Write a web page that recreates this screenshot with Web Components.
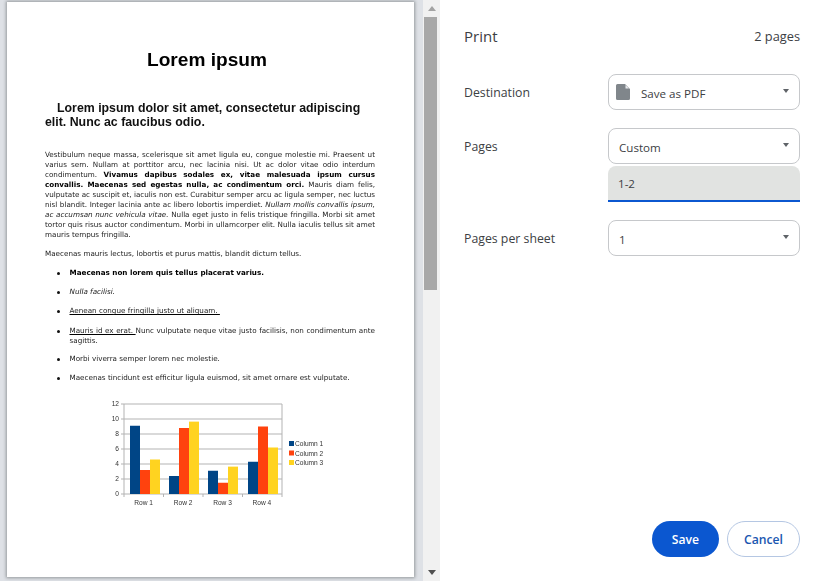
<!DOCTYPE html>
<html lang="en">
<head>
<meta charset="utf-8">
<title>Print</title>
<style>
  html, body { margin: 0; height: 100%; overflow: hidden; background: #fff; }
</style>
</head>
<body>
<print-app>
  <pdf-preview slot="preview">
    <h1 slot="title">Lorem ipsum</h1>
    <h2 slot="subtitle">Lorem ipsum dolor sit amet, consectetur adipiscing elit. Nunc ac faucibus odio.</h2>
  </pdf-preview>
  <print-sidebar slot="sidebar">
    <setting-row label="Destination">
      <select-box value="Save as PDF" icon></select-box>
    </setting-row>
    <setting-row label="Pages" tight>
      <select-box value="Custom"></select-box>
      <range-input value="1-2"></range-input>
    </setting-row>
    <setting-row label="Pages per sheet">
      <select-box value="1"></select-box>
    </setting-row>
  </print-sidebar>
</print-app>

<script>
class PrintApp extends HTMLElement {
    constructor() {
        super();
        this.attachShadow({ mode: 'open' }).innerHTML = `
            <style>
                :host { display: flex; width: 824px; height: 581px; overflow: hidden; }
                .left { width: 423px; flex: none; background: #dee1e6; }
                .right { flex: 1; min-width: 0; display: flex; }
            </style>
            <div class="left"><slot name="preview"></slot></div>
            <scroll-bar></scroll-bar>
            <div class="right"><slot name="sidebar"></slot></div>
        `;
    }
}

class ScrollBar extends HTMLElement {
    constructor() {
        super();
        this.attachShadow({ mode: 'open' }).innerHTML = `
            <style>
                :host { display: flex; flex-direction: column; width: 17px; flex: none; height: 581px; background: #f1f1f1; box-sizing: border-box; }
                .btn { height: 17px; flex: none; display: flex; align-items: center; justify-content: center; }
                .track { flex: 1; padding: 0 3px 0 1px; }
                .thumb { height: 273px; background: #a8a8a8; }
            </style>
            <div class="btn"><svg width="8" height="5" viewBox="0 0 8 5"><path d="M0 5L4 0l4 5z" fill="#a3a3a3"/></svg></div>
            <div class="track"><div class="thumb"></div></div>
            <div class="btn"><svg width="8" height="5" viewBox="0 0 8 5"><path d="M0 0h8L4 5z" fill="#505050"/></svg></div>
        `;
    }
}

class PdfPreview extends HTMLElement {
    constructor() {
        super();
        this.attachShadow({ mode: 'open' }).innerHTML = `
            <style>
                :host { display: block; padding: 2px 9px 0 7px; }
                .paper {
                    height: 575px; box-sizing: border-box; background: #fff;
                    box-shadow: 0 0 3px 1px rgba(60,64,67,.45);
                    padding: 46px 39px 0 38px;
                }
                .content { filter: blur(.25px); font: 7.2px/10.1px "DejaVu Sans", sans-serif; color: #222; }
                ::slotted(h1) { font: bold 19.1px/24px "Liberation Sans", sans-serif; color: #000; text-align: center; margin: 0 6px 29px 0; }
                ::slotted(h2) { font: bold 12.35px/14px "Liberation Sans", sans-serif; color: #111; margin: 0 0 20.5px; text-indent: 12px; }
                p { margin: 0 0 8.8px; text-align: justify; }
                ul { margin: 0; padding: 0 0 0 24.5px; list-style: none; }
                li { position: relative; margin: 0 0 8.9px; text-align: justify; }
                li::before { content: ""; position: absolute; left: -12.6px; top: 3.6px; width: 3px; height: 3px; border-radius: 50%; background: #111; }
                li.wide { margin: 9.9px 0 8px; }
                b { color: #000; }
                u { text-decoration-color: #000; text-decoration-thickness: 1px; }
                bar-chart { margin: 17px 0 0 39px; }
            </style>
            <div class="paper"><div class="content">
                <slot name="title"></slot>
                <slot name="subtitle"></slot>
                <p>Vestibulum neque massa, scelerisque sit amet ligula eu, congue molestie mi. Praesent ut varius sem. Nullam at porttitor arcu, nec lacinia nisi. Ut ac dolor vitae odio interdum condimentum. <b>Vivamus dapibus sodales ex, vitae malesuada ipsum cursus convallis. Maecenas sed egestas nulla, ac condimentum orci.</b> Mauris diam felis, vulputate ac suscipit et, iaculis non est. Curabitur semper arcu ac ligula semper, nec luctus nisl blandit. Integer lacinia ante ac libero lobortis imperdiet. <i>Nullam mollis convallis ipsum, ac accumsan nunc vehicula vitae.</i> Nulla eget justo in felis tristique fringilla. Morbi sit amet tortor quis risus auctor condimentum. Morbi in ullamcorper elit. Nulla iaculis tellus sit amet mauris tempus fringilla.</p>
                <p>Maecenas mauris lectus, lobortis et purus mattis, blandit dictum tellus.</p>
                <ul>
                    <li><b>Maecenas non lorem quis tellus placerat varius.</b></li>
                    <li><i>Nulla facilisi.</i></li>
                    <li><u>Aenean congue fringilla justo ut aliquam.&nbsp;</u></li>
                    <li class="wide"><u>Mauris id ex erat.&nbsp;</u>Nunc vulputate neque vitae justo facilisis, non condimentum ante sagittis.</li>
                    <li>Morbi viverra semper lorem nec molestie.</li>
                    <li>Maecenas tincidunt est efficitur ligula euismod, sit amet ornare est vulputate.</li>
                </ul>
                <bar-chart></bar-chart>
            </div></div>
        `;
    }
}

class BarChart extends HTMLElement {
    constructor() {
        super();
        const shadow = this.attachShadow({ mode: 'open' });
        const colors = ['#004586', '#ff420e', '#ffd320'];
        const data = [[9.1, 3.2, 4.6], [2.4, 8.8, 9.65], [3.1, 1.5, 3.65], [4.3, 9, 6.2]];
        const starts = [6, 45, 84, 124];
        const left = 40, top = 4, h = 90, unit = 7.5, right = 198;
        let s = '';
        for (let v = 0; v <= 12; v += 2) {
            const y = top + h - v * unit;
            s += `<path d="M${left - 3} ${y}H${right}" stroke="#b3b3b3" stroke-width="1"/>`;
            s += `<text x="${left - 5}" y="${y + 2.4}" text-anchor="end">${v}</text>`;
        }
        s += `<path d="M${left} ${top}V${top + h + 3}M${right} ${top}V${top + h + 3}" stroke="#b3b3b3"/>`;
        data.forEach((row, i) => {
            const x0 = left + starts[i];
            row.forEach((v, j) => {
                s += `<rect x="${x0 + j * 10}" y="${top + h - v * unit}" width="10" height="${v * unit}" fill="${colors[j]}"/>`;
            });
            const tick = left + (i + 1) * 39.5;
            if (i < 3) s += `<path d="M${tick} ${top + h}v3" stroke="#b3b3b3"/>`;
            s += `<text x="${left + 19.7 + i * 39.4}" y="${top + h + 11}" text-anchor="middle">Row ${i + 1}</text>`;
        });
        colors.forEach((c, j) => {
            const y = 41 + j * 9.5;
            s += `<rect x="205" y="${y}" width="5" height="5" fill="${c}"/>`;
            s += `<text x="211" y="${y + 5}">Column ${j + 1}</text>`;
        });
        shadow.innerHTML = `
            <style>
                :host { display: block; width: 260px; height: 112px; }
                svg { display: block; overflow: visible; }
                text { font: 6.6px "Liberation Sans", sans-serif; fill: #333; }
            </style>
            <svg width="260" height="112" viewBox="0 0 260 112">${s}</svg>
        `;
    }
}

class PrintSidebar extends HTMLElement {
    constructor() {
        super();
        this.attachShadow({ mode: 'open' }).innerHTML = `
            <style>
                :host {
                    display: flex; flex-direction: column; flex: 1; box-sizing: border-box; height: 581px;
                    padding: 0 24px 24px; font: 12.8px "Open Sans", sans-serif; color: #3c4043;
                }
                header { display: flex; justify-content: space-between; align-items: center; height: 74px; padding-bottom: 2px; box-sizing: border-box; }
                h1 { margin: 0; font: 400 15px "Open Sans", sans-serif; color: #3c4043; }
                .rows { flex: 1; display: flex; flex-direction: column; gap: 10px; }
                footer { display: flex; justify-content: flex-end; gap: 8px; }
                button { height: 36px; border-radius: 18px; font: 600 12.2px "Open Sans", sans-serif; cursor: pointer; box-sizing: border-box; padding: 0; }
                .save { width: 67px; background: #0b57d0; color: #fff; border: 0; }
                .cancel { width: 73px; background: #fff; color: #1a56b0; border: 1px solid #b5c7e3; }
            </style>
            <header><h1>Print</h1><span>2 pages</span></header>
            <div class="rows"><slot></slot></div>
            <footer>
                <button class="save">Save</button>
                <button class="cancel">Cancel</button>
            </footer>
        `;
    }
}

class SettingRow extends HTMLElement {
    constructor() {
        super();
        const shadow = this.attachShadow({ mode: 'open' });
        const label = this.getAttribute('label') || '';
        shadow.innerHTML = `
            <style>
                :host { display: grid; grid-template-columns: 144px 192px; }
                .label { height: 36px; display: flex; align-items: center; box-sizing: border-box; font-size: 12.3px; }
                .control { display: flex; flex-direction: column; gap: 2px; margin-bottom: 8px; }
            </style>
            <div class="label">${label}</div>
            <div class="control"><slot></slot></div>
        `;
    }
}

class SelectBox extends HTMLElement {
    constructor() {
        super();
        const shadow = this.attachShadow({ mode: 'open' });
        const value = this.getAttribute('value') || '';
        const icon = this.hasAttribute('icon')
            ? '<svg width="14" height="16" viewBox="0 0 14 16"><path d="M1.5 0H9l5 5v9.5a1.5 1.5 0 0 1-1.5 1.5h-11A1.5 1.5 0 0 1 0 14.5v-13A1.5 1.5 0 0 1 1.5 0z" fill="#80868b"/><path d="M9.5 1l3.5 3.5H9.5z" fill="#e8eaed"/></svg>'
            : '';
        shadow.innerHTML = `
            <style>
                :host {
                    display: flex; align-items: center; height: 36px; box-sizing: border-box;
                    border: 1px solid #c6c8cb; border-radius: 8px; background: #fff;
                    padding: 2px 10px 0 10px; font: 11.6px "Open Sans", sans-serif; color: #3c4043;
                }
                .icon { display: flex; margin: -3px 11px 0 -3px; }
                .value { flex: 1; }
                .arrow { margin-top: -5px; width: 0; height: 0; border: 3.5px solid transparent; border-top: 4px solid #5f6368; border-bottom: 0; }
            </style>
            ${icon ? `<span class="icon">${icon}</span>` : ''}
            <span class="value">${value}</span>
            <span class="arrow"></span>
        `;
    }
}

class RangeInput extends HTMLElement {
    constructor() {
        super();
        const shadow = this.attachShadow({ mode: 'open' });
        shadow.innerHTML = `
            <style>
                :host {
                    display: flex; align-items: center; height: 36px; box-sizing: border-box;
                    background: #e1e3e1; border-bottom: 2px solid #0b57d0; border-radius: 8px 8px 0 0;
                    padding: 0 10px; font: 11.6px "Open Sans", sans-serif; color: #3c4043;
                }
            </style>
            <span>${this.getAttribute('value') || ''}</span>
        `;
    }
}

customElements.define('print-app', PrintApp);
customElements.define('scroll-bar', ScrollBar);
customElements.define('pdf-preview', PdfPreview);
customElements.define('bar-chart', BarChart);
customElements.define('print-sidebar', PrintSidebar);
customElements.define('setting-row', SettingRow);
customElements.define('select-box', SelectBox);
customElements.define('range-input', RangeInput);
</script>
</body>
</html>
